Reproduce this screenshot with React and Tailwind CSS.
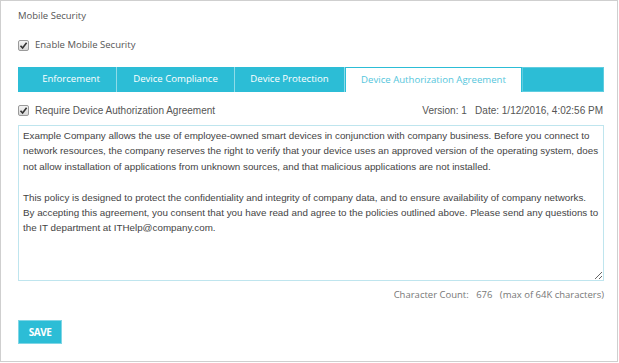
import React from 'react';

// line breaks follow the wrap in the original panel
const agreement = [
  'Example Company allows the use of employee-owned smart devices in conjunction with company business. Before you connect to',
  'network resources, the company reserves the right to verify that your device uses an approved version of the operating system, does',
  'not allow installation of applications from unknown sources, and that malicious applications are not installed.',
  '',
  'This policy is designed to protect the confidentiality and integrity of company data, and to ensure availability of company networks.',
  'By accepting this agreement, you consent that you have read and agree to the policies outlined above. Please send any questions to',
  'the IT department at ITHelp@company.com.',
].join('\n');

const tabs = ['Enforcement', 'Device Compliance', 'Device Protection', 'Device Authorization Agreement'];
const tabWidths = ['w-[99px] pl-[8px]', 'w-[118px]', 'w-[110px]', 'w-[177px]'];

// old-style grey checkbox
const Check = () => (
  <span className="inline-flex items-center justify-center w-[11px] h-[11px] rounded-[2px] border border-[#9a9a9a] bg-gradient-to-b from-[#f4f4f4] to-[#d8d8d8]">
    <svg width="9" height="9" viewBox="0 0 9 9">
      <path d="M1.5 4.8 L3.6 7 L7.6 1.8" fill="none" stroke="#333" strokeWidth="1.6" />
    </svg>
  </span>
);

const App = () => {
  return (
    <div className="w-[618px] h-[362px] border border-[#cfcfcf] bg-white pl-[17px] pr-[13px] font-['Open_Sans',sans-serif] text-[#555]">
      <div className="pt-[8px] text-[9.5px] leading-[14px]">Mobile Security</div>

      <label className="mt-[15px] flex items-center gap-[6px] text-[9.5px] leading-[14px]">
        <Check />
        <span>Enable Mobile Security</span>
      </label>

      <div className="mt-[15px] flex h-[25px] bg-[#2cbdd6]">
        {tabs.map((t, i) =>
          i === 3 ? (
            <div
              key={t}
              className={`${tabWidths[i]} flex items-center justify-center bg-white border-t border-x border-[#2cbdd6] text-[#55c6dc] text-[9.6px]`}
            >
              {t}
            </div>
          ) : (
            <div
              key={t}
              className={`${tabWidths[i]} flex items-center justify-center border-r border-[#8fdbe8] text-white text-[9.6px]`}
            >
              {t}
            </div>
          )
        )}
        <div className="flex-1 border border-[#5fcde0]"></div>
      </div>

      <div className="mt-[12px] flex items-center justify-between font-['Liberation_Sans',Arial,sans-serif] text-[10px] leading-[13px]">
        <label className="flex items-center gap-[6px]">
          <Check />
          <span>Require Device Authorization Agreement</span>
        </label>
        <span className="pr-[1px]">
          Version: 1&nbsp;&nbsp;&nbsp;Date: 1/12/2016, 4:02:56 PM
        </span>
      </div>

      <textarea
        readOnly
        value={agreement}
        className="mt-[8px] block w-full h-[156px] border border-[#bfe5ee] pl-[4px] pr-[1px] pt-[2px] font-['Liberation_Sans',Arial,sans-serif] text-[9.8px] leading-[15.4px] text-[#444] outline-none resize-y"
      />

      <div className="mt-[7px] text-right text-[9.5px] leading-[14px] text-[#777]">
        Character Count:&nbsp;&nbsp; 676&nbsp;&nbsp; (max of 64K characters)
      </div>

      <button className="mt-[18px] w-[44px] h-[24px] bg-[#2cbdd6] border border-[#7fd6e6] text-white text-[10px] font-bold tracking-[-0.5px]">
        SAVE
      </button>
    </div>
  );
};

export default App;
